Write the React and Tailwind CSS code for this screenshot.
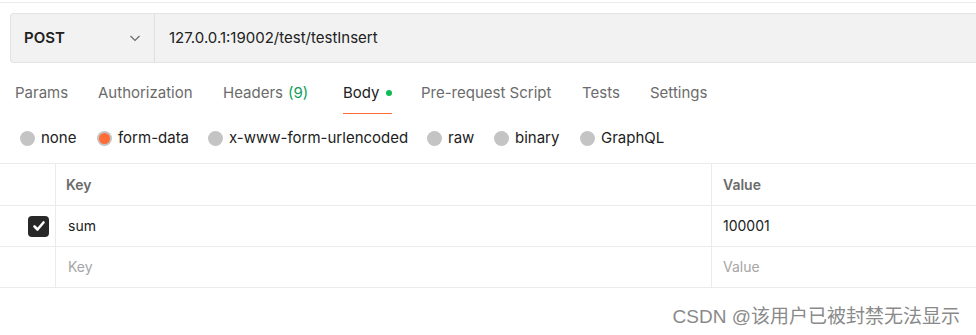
import React from "react";

const tabs = [
  { label: "Params", w: "w-[83px]" },
  { label: "Authorization", w: "w-[125px]" },
  { label: "Headers", count: "(9)", w: "w-[120px]" },
  { label: "Body", active: true, w: "w-[78px]" },
  { label: "Pre-request Script", w: "w-[161px]" },
  { label: "Tests", w: "w-[68px]" },
  { label: "Settings", w: "" },
];

const bodyTypes = [
  { label: "none", w: "w-[77px]" },
  { label: "form-data", active: true, w: "w-[111px]" },
  { label: "x-www-form-urlencoded", w: "w-[219px]" },
  { label: "raw", w: "w-[67px]" },
  { label: "binary", w: "w-[86px]" },
  { label: "GraphQL", w: "" },
];

const Radio = ({ active }) =>
  active ? (
    <span className="w-[15px] h-[15px] rounded-full bg-[#c4c4c4] flex items-center justify-center">
      <span className="w-[11px] h-[11px] rounded-full bg-[#ff6c37]"></span>
    </span>
  ) : (
    <span className="w-[15px] h-[15px] rounded-full bg-[#c4c4c4]"></span>
  );

export default function App() {
  return (
    <div className="w-[976px] h-[335px] bg-white font-['Inter','Noto_Sans_CJK_SC',sans-serif] text-[#212121] overflow-hidden">
      <div className="h-[3px] border-b border-[#ebebeb]"></div>

      {/* request bar */}
      <div className="ml-[10px] mt-[10px] h-[50px] flex bg-[#f2f2f2] border border-[#e3e3e3] border-r-0 rounded-l-[4px]">
        <div className="w-[144px] flex items-center justify-between pl-[13px] pr-[12px] border-r border-[#e0e0e0]">
          <span className="text-[15px] font-semibold text-[#212121]">POST</span>
          <svg width="14" height="14" viewBox="0 0 14 14" fill="none" stroke="#6b6b6b" strokeWidth="1.2">
            <path d="M2.5 5L7 9.5 11.5 5" />
          </svg>
        </div>
        <div className="flex items-center pl-[14px] text-[15px] text-[#212121]">127.0.0.1:19002/test/testInsert</div>
      </div>

      {/* tabs */}
      <div className="flex items-end h-[51px] pl-[15px]">
        {tabs.map((t) => (
          <div key={t.label} className={`h-[32px] flex ${t.w}`}>
            <div className="flex flex-col">
              <div className={`flex items-center text-[15px] ${t.active ? "text-[#212121]" : "text-[#6b6b6b]"}`}>
                <span>{t.label}</span>
                {t.count && <span className="ml-[5px] text-[#0f9d58]">{t.count}</span>}
                {t.active && <span className="ml-[6px] w-[6px] h-[6px] rounded-full bg-[#0cbb52]"></span>}
              </div>
              {t.active && <div className="mt-[8px] h-[2px] bg-[#ff6c37]"></div>}
            </div>
          </div>
        ))}
      </div>

      {/* body types */}
      <div className="flex items-center h-[50px] pl-[20px] -mt-[1px]">
        {bodyTypes.map((b) => (
          <div key={b.label} className={`flex items-center gap-[6px] ${b.w}`}>
            <Radio active={b.active} />
            <span className="text-[15px] text-[#212121]">{b.label}</span>
          </div>
        ))}
      </div>

      {/* table */}
      <div className="border-t border-[#ebebeb]">
        <div className="grid grid-cols-[56px_656px_1fr] h-[42px] border-b border-[#ebebeb]">
          <div className="border-r border-[#ebebeb]"></div>
          <div className="border-r border-[#ebebeb] flex items-center pl-[10px] text-[14px] font-semibold text-[#6b6b6b]">Key</div>
          <div className="flex items-center pl-[11px] text-[14px] font-semibold text-[#6b6b6b]">Value</div>
        </div>
        <div className="grid grid-cols-[56px_656px_1fr] h-[41px] border-b border-[#ebebeb]">
          <div className="border-r border-[#ebebeb] flex items-center justify-end pr-[6px]">
            <span className="w-[21px] h-[21px] rounded-[4px] bg-[#282828] flex items-center justify-center">
              <svg width="14" height="14" viewBox="0 0 14 14" fill="none" stroke="#fff" strokeWidth="2.6" strokeLinecap="round" strokeLinejoin="round">
                <path d="M2.5 7.5l3 3 6-7" />
              </svg>
            </span>
          </div>
          <div className="border-r border-[#ebebeb] flex items-center pl-[12px] pb-[2px] text-[14px] text-[#212121]">sum</div>
          <div className="flex items-center pl-[11px] pb-[2px] text-[14px] text-[#212121]">100001</div>
        </div>
        <div className="grid grid-cols-[56px_656px_1fr] h-[41px] border-b border-[#ebebeb]">
          <div className="border-r border-[#ebebeb]"></div>
          <div className="border-r border-[#ebebeb] flex items-center pl-[12px] pb-[2px] text-[14px] text-[#a6a6a6]">Key</div>
          <div className="flex items-center pl-[11px] pb-[2px] text-[14px] text-[#a6a6a6]">Value</div>
        </div>
      </div>

      {/* watermark */}
      <div className="flex justify-end pr-[16px] mt-[15px]">
        <span className="text-[19px] text-[#8a8a8a] font-['Liberation_Sans','Noto_Sans_CJK_SC',sans-serif]">CSDN @该用户已被封禁无法显示</span>
      </div>
    </div>
  );
}
